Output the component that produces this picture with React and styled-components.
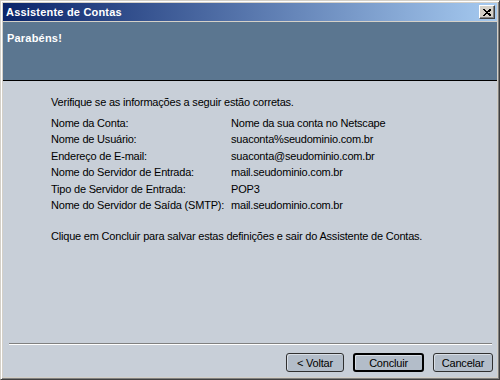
import React from 'react';
import styled, { createGlobalStyle } from 'styled-components';

const Global = createGlobalStyle`
    html, body {
        margin:0;
        padding:0;
        background:#d4d0c8;
    }
    * {
        box-sizing:border-box;
    }
`;

const Window = styled.div`
    width:500px;
    height:380px;
    display:flex;
    flex-direction:column;
    padding:2px;
    background:#d4d0c8;
    border-top:1px solid #d4d0c8;
    border-left:1px solid #d4d0c8;
    border-right:1px solid #404040;
    border-bottom:1px solid #404040;
    box-shadow:inset 1px 1px 0 #ffffff, inset -1px -1px 0 #808080;
    font-family:"Liberation Sans", Arial, sans-serif;
    font-size:11px;
    color:#000;
`;

const TitleBar = styled.div`
    height:18px;
    display:flex;
    align-items:center;
    justify-content:space-between;
    padding:0 2px 0 2px;
    background:linear-gradient(to right, #0a246a, #a6caf0);
`;

const TitleText = styled.span`
    color:#fff;
    font-weight:bold;
    font-size:11px;
    padding-left:1px;
    letter-spacing:0.2px;
`;

const CloseButton = styled.div`
    width:16px;
    height:14px;
    background:#d4d0c8;
    border-top:1px solid #ffffff;
    border-left:1px solid #ffffff;
    border-right:1px solid #404040;
    border-bottom:1px solid #404040;
    box-shadow:inset -1px -1px 0 #808080;
    display:flex;
    align-items:center;
    justify-content:center;
`;

const Header = styled.div`
    margin-top:1px;
    height:59px;
    background:#5b7690;
    border-bottom:1px solid #000;
    padding:10px 0 0 4px;
`;

const HeaderTitle = styled.div`
    color:#fff;
    font-weight:bold;
    font-size:11px;
    letter-spacing:0.2px;
`;

const Body = styled.div`
    flex:1;
    display:flex;
    flex-direction:column;
    background:#c8cfd8;
    letter-spacing:-0.2px;
`;

const Content = styled.div`
    flex:1;
    padding:13px 0 0 48px;
`;

const Intro = styled.p`
    margin:0 0 5px 0;
    line-height:16px;
`;

const Details = styled.div`
    display:grid;
    grid-template-columns:180px auto;
    line-height:16.4px;
`;

const Outro = styled.p`
    margin:15px 0 0 0;
    line-height:16px;
`;

const Separator = styled.div`
    margin:0 5px 0 6px;
    height:2px;
    border-top:1px solid #808080;
    border-bottom:1px solid #ffffff;
`;

const ButtonRow = styled.div`
    display:flex;
    justify-content:flex-end;
    gap:9px;
    padding:8px 4px 5px 0;
`;

const Button = styled.div`
    width:${ p => p.w }px;
    height:19px;
    display:flex;
    align-items:center;
    justify-content:center;
    background:#b3bdc9;
    border:${ p => p.primary ? '2px solid #000' : '1px solid #303030' };
    border-radius:3px;
    box-shadow:inset 1px 1px 0 #d8dee6;
`;

const rows = [
    ['Nome da Conta:', 'Nome da sua conta no Netscape'],
    ['Nome de Usuário:', 'suaconta%seudominio.com.br'],
    ['Endereço de E-mail:', 'suaconta@seudominio.com.br'],
    ['Nome do Servidor de Entrada:', 'mail.seudominio.com.br'],
    ['Tipo de Servidor de Entrada:', 'POP3'],
    ['Nome do Servidor de Saída (SMTP):', 'mail.seudominio.com.br'],
];

const App = () => {
    return (
        <Window>
            <Global />
            <TitleBar>
                <TitleText>Assistente de Contas</TitleText>
                <CloseButton>
                    <svg width="8" height="7" viewBox="0 0 8 7">
                        <path d="M0.5 0.5 L7 6.5 M1.5 0.5 L8 6.5 M7 0.5 L0.5 6.5 M8 0.5 L1.5 6.5" stroke="#000" strokeWidth="1" fill="none" shapeRendering="crispEdges"/>
                    </svg>
                </CloseButton>
            </TitleBar>
            <Header>
                <HeaderTitle>Parabéns!</HeaderTitle>
            </Header>
            <Body>
                <Content>
                    <Intro>Verifique se as informações a seguir estão corretas.</Intro>
                    <Details>
                        {rows.map(([label, value]) => (
                            <React.Fragment key={label}>
                                <span>{label}</span>
                                <span>{value}</span>
                            </React.Fragment>
                        ))}
                    </Details>
                    <Outro>Clique em Concluir para salvar estas definições e sair do Assistente de Contas.</Outro>
                </Content>
                <Separator />
                <ButtonRow>
                    <Button w={58}>&lt; Voltar</Button>
                    <Button w={71} primary>Concluir</Button>
                    <Button w={60}>Cancelar</Button>
                </ButtonRow>
            </Body>
        </Window>
    )
}
export default App;
